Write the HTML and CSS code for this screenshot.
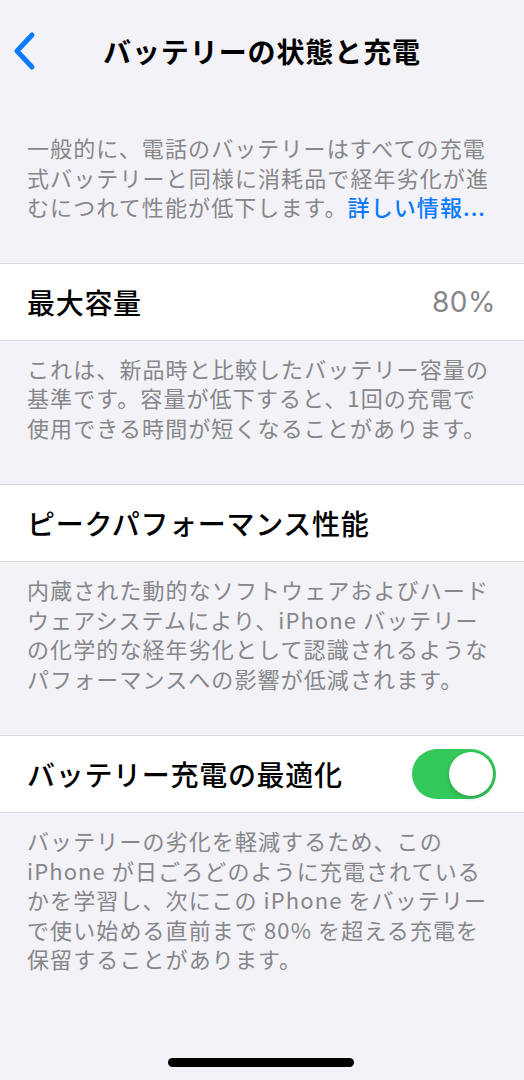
FILE: index.html
```html
<!DOCTYPE html>
<html lang="ja">
<head>
    <meta charset="UTF-8">
    <meta name="viewport" content="width=device-width, initial-scale=1.0">
    <title>バッテリーの状態と充電</title>
    <link rel="stylesheet" href="styles.css">
</head>
<body>

    <!-- ナビゲーションバー -->
    <header class="nav-bar">
        <a href="#" class="nav-back" aria-label="戻る">
            <svg width="26" height="40" viewBox="0 0 26 40">
                <path d="M20 4 L5 20 L20 36" fill="none" stroke="#0a7aff" stroke-width="5" stroke-linecap="round" stroke-linejoin="round"/>
            </svg>
        </a>
        <h1 class="nav-title">バッテリーの状態と充電</h1>
        <span></span>
    </header>

    <main class="settings">
        <p class="intro">
            一般的に、電話のバッテリーはすべての充電<br>
            式バッテリーと同様に消耗品で経年劣化が進<br>
            むにつれて性能が低下します。<a href="#" class="more-link">詳しい情報...</a>
        </p>

        <!-- 最大容量 -->
        <section class="group">
            <div class="row">
                <span class="row-label">最大容量</span>
                <span class="row-value">80%</span>
            </div>
            <p class="footer">
                これは、新品時と比較したバッテリー容量の<br>
                基準です。容量が低下すると、1回の充電で<br>
                使用できる時間が短くなることがあります。
            </p>
        </section>

        <!-- ピークパフォーマンス -->
        <section class="group">
            <div class="row">
                <span class="row-label">ピークパフォーマンス性能</span>
            </div>
            <p class="footer">
                内蔵された動的なソフトウェアおよびハード<br>
                ウェアシステムにより、iPhone バッテリー<br>
                の化学的な経年劣化として認識されるような<br>
                パフォーマンスへの影響が低減されます。
            </p>
        </section>

        <!-- 充電の最適化 -->
        <section class="group">
            <div class="row">
                <span class="row-label">バッテリー充電の最適化</span>
                <label class="switch">
                    <input type="checkbox" checked>
                    <span class="switch-track"></span>
                </label>
            </div>
            <p class="footer">
                バッテリーの劣化を軽減するため、この<br>
                iPhone が日ごろどのように充電されている<br>
                かを学習し、次にこの iPhone をバッテリー<br>
                で使い始める直前まで 80% を超える充電を<br>
                保留することがあります。
            </p>
        </section>
    </main>

    <div class="home-indicator"></div>

</body>
</html>
```

FILE: styles.css
```css
/* --- 基本スタイル --- */
:root {
    --bg: #f2f2f7;
    --cell: #ffffff;
    --separator: #d9d9de;
    --label: #000000;
    --secondary: #86868b;
    --tint: #0a7aff;
    --green: #34c759;
}

* {
    box-sizing: border-box;
}

body {
    margin: 0;
    width: 524px;
    height: 1080px;
    position: relative;
    overflow: hidden;
    background-color: var(--bg);
    color: var(--label);
    font-family: "Inter", "Noto Sans CJK JP", sans-serif;
}

/* --- ナビゲーションバー --- */
.nav-bar {
    display: grid;
    grid-template-columns: 1fr auto 1fr;
    align-items: center;
    height: 104px;
    padding-bottom: 2px;
}

.nav-back {
    display: flex;
    align-items: center;
    padding-left: 12px;
}

.nav-title {
    margin: 0;
    font-size: 28px;
    font-weight: 700;
    letter-spacing: 0.9px;
    font-family: "Noto Sans CJK JP", sans-serif;
}

/* --- 説明テキスト --- */
.intro,
.footer {
    margin: 0;
    color: var(--secondary);
    font-size: 22px;
    line-height: 29.5px;
    letter-spacing: 1.1px;
    font-family: "Noto Sans CJK JP", sans-serif;
    white-space: nowrap;
}

.intro {
    padding: 29px 27px 41px;
}

.more-link {
    color: var(--tint);
    text-decoration: none;
    font-weight: 500;
}

.footer {
    padding: 13px 27px 42px;
}

/* --- セル --- */
.row {
    display: flex;
    align-items: center;
    justify-content: space-between;
    height: 78px;
    padding: 0 28px 0 27px;
    background-color: var(--cell);
    border-top: 1px solid var(--separator);
    border-bottom: 1px solid var(--separator);
}

.row-label {
    font-size: 28px;
    font-weight: 500;
    letter-spacing: 0.7px;
    font-family: "Noto Sans CJK JP", sans-serif;
}

.row-value {
    color: var(--secondary);
    font-size: 28px;
    letter-spacing: 0.5px;
}

/* --- スイッチ --- */
.switch {
    position: relative;
    display: block;
    width: 84px;
    height: 50px;
}

.switch input {
    display: none;
}

.switch-track {
    display: block;
    width: 100%;
    height: 100%;
    border-radius: 25px;
    background-color: var(--green);
}

.switch-track::after {
    content: "";
    position: absolute;
    top: 3px;
    right: 3px;
    width: 44px;
    height: 44px;
    border-radius: 50%;
    background-color: #fff;
    box-shadow: 0 2px 5px rgba(0, 0, 0, 0.18);
}

/* --- ホームインジケーター --- */
.home-indicator {
    position: absolute;
    left: 168px;
    bottom: 13px;
    width: 186px;
    height: 9px;
    border-radius: 5px;
    background-color: #000;
}
```
